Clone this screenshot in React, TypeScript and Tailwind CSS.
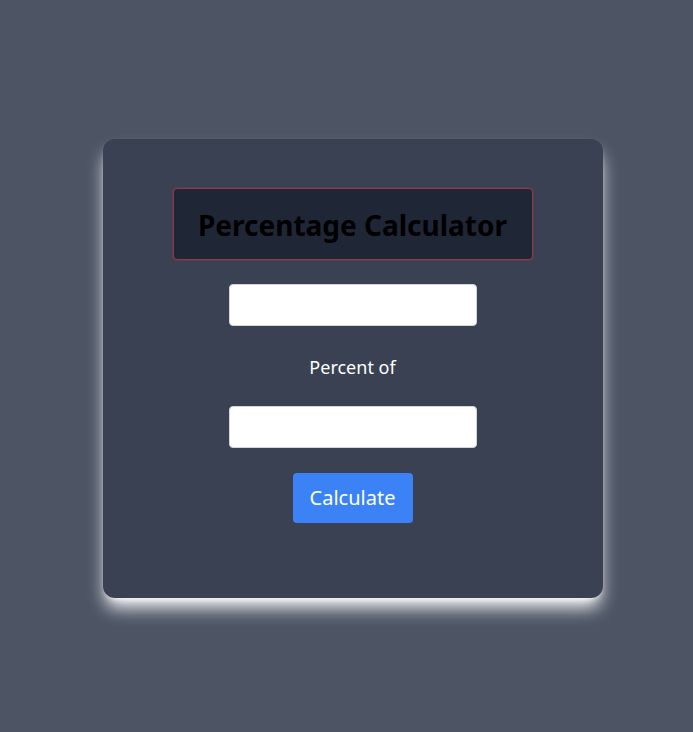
export default function App() {
    return (
        <div
            className="min-h-screen bg-[#4d5565] flex items-center justify-center pl-3"
            style={{ fontFamily: '"Noto Sans", "Open Sans", sans-serif' }}
        >
            <div className="w-[500px] h-[459px] bg-[#394152] rounded-xl shadow-[0_12px_18px_-3px_#fff,0_4px_6px_-4px_#fff] flex flex-col items-center pt-[49px] mt-1">
                <div className="w-[360px] h-[72px] bg-[#1f2737] border border-[#8d3b4a] rounded shadow-[0_0_2px_rgba(220,60,80,0.6)] flex items-center justify-center">
                    <h1 className="text-[28px] font-bold text-black mt-0.5">Percentage Calculator</h1>
                </div>
                <input type="text" className="mt-6 w-[248px] h-[42px] bg-white rounded-sm border border-gray-300 outline-none px-2" />
                <p className="mt-[28px] text-lg text-white leading-[26px]">Percent of</p>
                <input type="text" className="mt-[26px] w-[248px] h-[42px] bg-white rounded-sm border border-gray-300 outline-none px-2" />
                <button className="mt-[25px] w-[120px] h-[50px] bg-[#3b82f6] text-white text-xl rounded-sm">Calculate</button>
            </div>
        </div>
    );
}
